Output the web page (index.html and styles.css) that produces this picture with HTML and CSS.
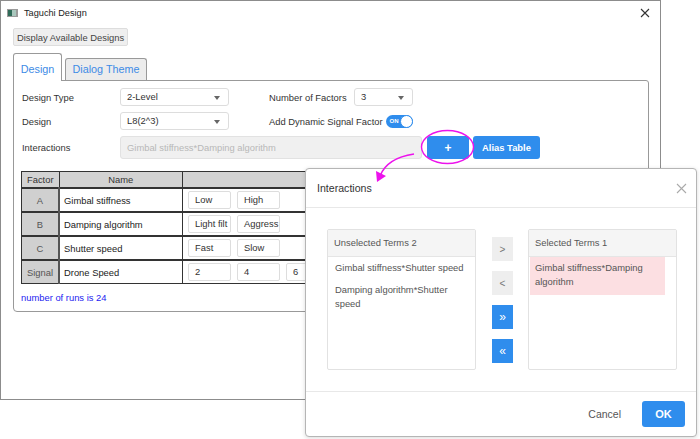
FILE: index.html
```html
<!DOCTYPE html>
<html lang="en">
<head>
    <meta charset="UTF-8">
    <title>Taguchi Design</title>
    <link rel="stylesheet" href="styles.css">
</head>
<body>
    <div class="window">
        <div class="titlebar">
            <span class="app-icon"></span>
            <span class="title">Taguchi Design</span>
            <svg class="win-close" width="10" height="10" viewBox="0 0 10 10"><path d="M1 1L9 9M9 1L1 9" stroke="#333" stroke-width="1.1"/></svg>
        </div>

        <div class="win-body">
            <button class="plain-btn">Display Available Designs</button>

            <div class="tabs">
                <div class="tab active">Design</div>
                <div class="tab">Dialog Theme</div>
            </div>

            <div class="panel">
                <div class="form-row">
                    <label class="lbl">Design Type</label>
                    <div class="select wide">2-Level<span class="caret"></span></div>
                    <label class="lbl lbl-2">Number of Factors</label>
                    <div class="select narrow">3<span class="caret"></span></div>
                </div>
                <div class="form-row">
                    <label class="lbl">Design</label>
                    <div class="select wide">L8(2^3)<span class="caret"></span></div>
                    <label class="lbl lbl-2 auto">Add Dynamic Signal Factor</label>
                    <div class="toggle"><span>ON</span><i></i></div>
                </div>
                <div class="form-row tall">
                    <label class="lbl">Interactions</label>
                    <div class="terms-input">Gimbal stiffness*Damping algorithm</div>
                    <button class="blue-btn plus">+</button>
                    <button class="blue-btn alias">Alias Table</button>
                </div>

                <table class="factors">
                    <tr>
                        <th class="c-factor">Factor</th>
                        <th class="c-name">Name</th>
                        <th class="c-levels"></th>
                    </tr>
                    <tr>
                        <td class="c-factor">A</td>
                        <td class="c-name">Gimbal stiffness</td>
                        <td class="c-levels"><span class="lvl">Low</span><span class="lvl">High</span></td>
                    </tr>
                    <tr>
                        <td class="c-factor">B</td>
                        <td class="c-name">Damping algorithm</td>
                        <td class="c-levels"><span class="lvl">Light filt</span><span class="lvl">Aggress</span></td>
                    </tr>
                    <tr>
                        <td class="c-factor">C</td>
                        <td class="c-name">Shutter speed</td>
                        <td class="c-levels"><span class="lvl">Fast</span><span class="lvl">Slow</span></td>
                    </tr>
                    <tr>
                        <td class="c-factor">Signal</td>
                        <td class="c-name">Drone Speed</td>
                        <td class="c-levels"><span class="lvl">2</span><span class="lvl">4</span><span class="lvl">6</span></td>
                    </tr>
                </table>

                <p class="runs">number of runs is 24</p>
            </div>
        </div>
    </div>

    <!-- dialog over the main window -->
    <div class="dialog">
        <div class="dlg-head">
            <span>Interactions</span>
            <svg width="11" height="11" viewBox="0 0 11 11"><path d="M1 1L10 10M10 1L1 10" stroke="#aaa" stroke-width="1.1"/></svg>
        </div>
        <div class="dlg-body">
            <div class="list">
                <div class="list-head">Unselected Terms 2</div>
                <div class="item">Gimbal stiffness*Shutter speed</div>
                <div class="item">Damping algorithm*Shutter speed</div>
            </div>
            <div class="movers">
                <button class="mv">&gt;</button>
                <button class="mv">&lt;</button>
                <button class="mv blue">&raquo;</button>
                <button class="mv blue">&laquo;</button>
            </div>
            <div class="list">
                <div class="list-head">Selected Terms 1</div>
                <div class="item picked">Gimbal stiffness*Damping algorithm</div>
            </div>
        </div>
        <div class="dlg-foot">
            <button class="cancel">Cancel</button>
            <button class="ok">OK</button>
        </div>
    </div>

    <svg class="marks" width="700" height="439" viewBox="0 0 700 439">
        <ellipse cx="447.5" cy="147" rx="26" ry="16.5" fill="none" stroke="#ec12ec" stroke-width="1.4"/>
        <path d="M414 154 Q387 158 380 176" fill="none" stroke="#ec12ec" stroke-width="1.6"/>
        <path d="M377 182 L376 171 L386 176 Z" fill="#ec12ec"/>
    </svg>
</body>
</html>
```

FILE: styles.css
```css
body {
    margin: 0;
    background: #fff;
    font-family: "Liberation Sans", Arial, sans-serif;
    font-size: 9.4px;
    color: #333;
    width: 700px;
    height: 439px;
    overflow: hidden;
}

button {
    font-family: inherit;
    font-size: 9.4px;
    cursor: pointer;
}

.window {
    width: 659px;
    height: 398px;
    border: 1px solid #8c8c8c;
}

.titlebar {
    display: flex;
    align-items: center;
    height: 23px;
    padding: 0 0 0 6px;
}

.app-icon {
    width: 8px;
    height: 6px;
    border: 1px solid #9a9a9a;
    border-right-width: 2px;
    background: linear-gradient(90deg, #2f6b58 0 50%, #a9c7bd 50%);
    margin-right: 6px;
}

.title {
    font-size: 9.2px;
    color: #222;
    flex: 1;
}

.win-close {
    margin-right: 10px;
}

.win-body {
    padding: 4px 11px 0 12px;
}

.plain-btn {
    height: 18px;
    width: 115px;
    padding: 0;
    background: #efefef;
    border: 1px solid #ddd;
    border-radius: 2px;
    color: #444;
}

.tabs {
    display: flex;
    align-items: flex-end;
    gap: 3px;
    margin-top: 7px;
    height: 27px;
}

.tab {
    font-size: 10.8px;
    color: #3d8be6;
    border: 1px solid #999;
    border-bottom: none;
    border-radius: 3px 3px 0 0;
    background: #ececec;
    height: 21px;
    line-height: 20px;
    width: 80px;
    text-align: center;
}

.tab.active {
    background: #fff;
    height: 27px;
    line-height: 31px;
    width: 47px;
    position: relative;
    top: 1px;
}

.panel {
    width: 619px;
    height: 223px;
    border: 1px solid #999;
    border-radius: 0 3px 4px 4px;
    padding: 7px 8px 0 7px;
}

.form-row {
    display: flex;
    align-items: center;
    height: 18px;
    margin-bottom: 6px;
}

.form-row.tall {
    height: 23px;
    margin-top: 1px;
    margin-bottom: 0;
}

.lbl {
    width: 98px;
    padding-left: 1px;
    color: #333;
}

.lbl-2 {
    width: 85px;
    margin-left: 40px;
    padding-left: 0;
}

.lbl-2.auto {
    width: auto;
    white-space: nowrap;
    margin-right: 3px;
}

.select {
    position: relative;
    height: 16px;
    line-height: 16px;
    border: 1px solid #ddd;
    border-radius: 3px;
    padding-left: 6px;
    box-sizing: content-box;
}

.select.wide {
    width: 101px;
}

.select.narrow {
    width: 51px;
}

.caret {
    position: absolute;
    right: 8px;
    top: 7px;
    border-left: 3.5px solid transparent;
    border-right: 3.5px solid transparent;
    border-top: 4px solid #666;
}

.toggle {
    display: flex;
    align-items: center;
    justify-content: space-between;
    width: 27px;
    height: 13px;
    border-radius: 7px;
    background: #2f8ded;
    box-sizing: border-box;
    padding-left: 4px;
}

.toggle span {
    font-size: 6px;
    color: #fff;
    font-weight: bold;
}

.toggle i {
    width: 11px;
    height: 11px;
    border-radius: 50%;
    background: #fff;
    border: 1px solid #2f8ded;
}

.terms-input {
    width: 294px;
    height: 21px;
    line-height: 21px;
    background: #f0f0f0;
    border: 1px solid #e2e2e2;
    border-radius: 3px;
    padding-left: 6px;
    color: #b8b8b8;
}

.blue-btn {
    height: 23px;
    background: #2f8ded;
    border: none;
    border-radius: 3px;
    color: #fff;
    font-weight: bold;
}

.blue-btn.plus {
    width: 42px;
    margin-left: 5px;
    font-size: 12px;
}

.blue-btn.alias {
    width: 67px;
    margin-left: 4px;
}

.factors {
    border-collapse: collapse;
    margin-top: 12px;
    border: 1px solid #333;
}

.factors th {
    background: #d3d3d3;
    font-weight: normal;
    height: 15px;
    padding: 0;
    color: #333;
    border: 1px solid #333;
}

.factors td {
    border: 1px solid #333;
    border-top-width: 2px;
    padding: 0;
    height: 22px;
}

.factors td.c-factor {
    background: #d0d0d0;
    text-align: center;
    color: #555;
    border-right: 2px solid #555;
}

.c-factor {
    width: 36px;
}

.c-name {
    width: 118px;
}

td.c-name {
    padding-left: 4px;
    color: #222;
}

.c-levels {
    width: 190px;
}

td.c-levels {
    padding-left: 5px;
    white-space: nowrap;
}

.lvl {
    display: inline-block;
    width: 35px;
    height: 16px;
    line-height: 16px;
    padding-left: 6px;
    margin-right: 6px;
    border: 1px solid #ddd;
    border-radius: 2px;
    overflow: hidden;
    vertical-align: middle;
    color: #333;
}

.runs {
    margin: 8px 0 0;
    color: #2323f0;
}

.dialog {
    position: absolute;
    left: 305px;
    top: 168px;
    width: 390px;
    height: 267px;
    background: #fff;
    border: 1px solid #b5b5b5;
    border-radius: 4px;
    box-shadow: 0 1px 4px rgba(0, 0, 0, 0.15);
    display: flex;
    flex-direction: column;
}

.dlg-head {
    display: flex;
    justify-content: space-between;
    align-items: center;
    height: 38px;
    padding: 0 9px 0 11px;
    border-bottom: 1px solid #e8e8e8;
    font-size: 10.6px;
    color: #333;
}

.dlg-body {
    display: flex;
    padding: 21px 0 0 21px;
    height: 162px;
}

.list {
    width: 147px;
    height: 139px;
    border: 1px solid #e2e2e2;
    border-radius: 2px;
}

.list-head {
    height: 26px;
    line-height: 26px;
    background: #f5f5f5;
    border-bottom: 1px solid #e5e5e5;
    padding-left: 6px;
    color: #555;
}

.item {
    padding: 4px 7px;
    line-height: 14px;
    color: #555;
}

.item.picked {
    background: #fcdfe2;
    margin: 0 11px 0 1px;
    padding: 4px 5px 6px;
}

.movers {
    display: flex;
    flex-direction: column;
    gap: 10px;
    padding-top: 8px;
    margin: 0 15px 0 16px;
}

.mv {
    width: 21px;
    height: 24px;
    padding: 0;
    border: none;
    background: #eee;
    color: #777;
    font-size: 10px;
}

.mv.blue {
    background: #2f8ded;
    color: #fff;
    font-size: 12px;
}

.dlg-foot {
    display: flex;
    justify-content: flex-end;
    align-items: center;
    gap: 21px;
    border-top: 1px solid #e8e8e8;
    flex: 1;
    padding-right: 11px;
}

.cancel {
    border: none;
    background: none;
    color: #555;
    font-size: 10.5px;
    padding: 0;
}

.ok {
    width: 43px;
    height: 26px;
    border: none;
    border-radius: 3px;
    background: #2f8ded;
    color: #fff;
    font-weight: bold;
    font-size: 11px;
}

.marks {
    position: absolute;
    left: 0;
    top: 0;
    pointer-events: none;
}
```
